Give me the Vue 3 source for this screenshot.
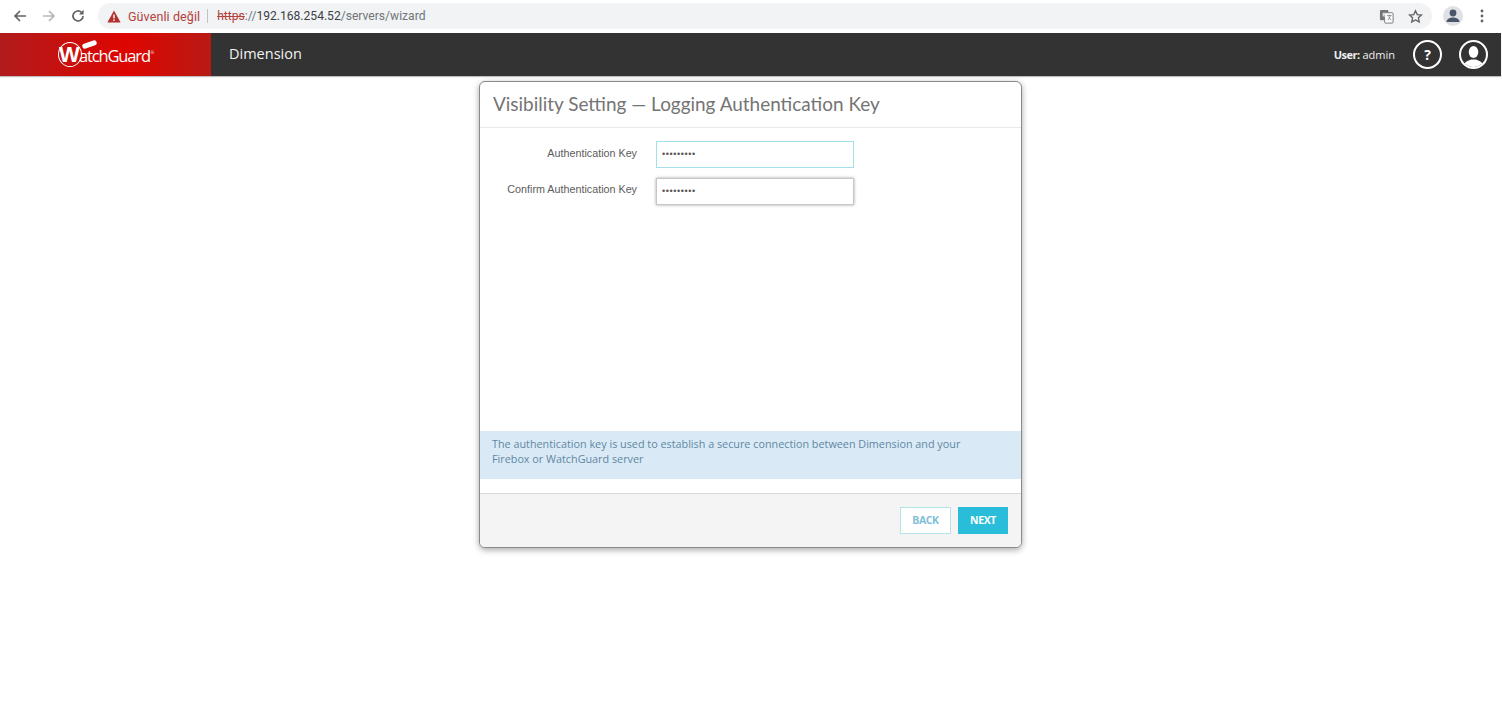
<script setup>
const fields = [
  { label: 'Authentication Key', value: '•••••••••', focused: true },
  { label: 'Confirm Authentication Key', value: '•••••••••', focused: false }
]
</script>

<template>
  <div class="page">
    <div class="toolbar">
      <svg class="nav-icon" viewBox="0 0 16 16"><path d="M14 8H3M8 3L3 8l5 5" fill="none" stroke="#5f6368" stroke-width="1.7" /></svg>
      <svg class="nav-icon forward" viewBox="0 0 16 16"><path d="M2 8h11M8 3l5 5-5 5" fill="none" stroke="#b4b6b9" stroke-width="1.7" /></svg>
      <svg class="nav-icon reload" viewBox="0 0 16 16"><path d="M13 8a5 5 0 1 1-1.500-3.600" fill="none" stroke="#5f6368" stroke-width="1.7" /><path d="M13.600 1.800v4.600H9z" fill="#5f6368" /></svg>
      <div class="omnibox">
        <svg class="warn" viewBox="0 0 14 13"><path d="M7 0.500L13.600 12.500H0.400z" fill="#b3312c" /><path d="M6.300 4.600h1.400v4H6.300zM6.300 9.600h1.400v1.400H6.300z" fill="#fff" /></svg>
        <span class="insecure">Güvenli değil</span>
        <span class="divider"></span>
        <span class="url"><span class="scheme">https</span><span class="slashes">://</span><span class="host">192.168.254.52</span>/servers/wizard</span>
        <svg class="translate" viewBox="0 0 16 16">
          <rect x="1" y="1" width="9" height="11" rx="1" fill="#73777b" />
          <rect x="6" y="4" width="9" height="11" rx="1" fill="#fff" stroke="#73777b" />
          <path d="M8.500 7h5M11 6v1M9.500 12l3-5M10 8l3 4" fill="none" stroke="#73777b" stroke-width="0.8" />
          <path d="M7 4.500H4.500v3H7M4.500 6H7" fill="none" stroke="#fff" stroke-width="0.9" />
        </svg>
        <svg class="star" viewBox="0 0 16 16"><path d="M8 1.800l1.900 4.100 4.500.5-3.300 3 .9 4.400L8 11.600l-4 2.200.9-4.400-3.300-3 4.500-.5z" fill="none" stroke="#5f6368" stroke-width="1.4" /></svg>
      </div>
      <div class="avatar">
        <svg viewBox="0 0 20 20"><circle cx="10" cy="7" r="3.400" fill="#4a5568" /><path d="M3.600 15.500c0-2.800 4-4 6.400-4s6.400 1.200 6.400 4v.5H3.600z" fill="#4a5568" /></svg>
      </div>
      <svg class="menu" viewBox="0 0 4 16"><circle cx="2" cy="3" r="1.400" fill="#5f6368" /><circle cx="2" cy="8" r="1.400" fill="#5f6368" /><circle cx="2" cy="13" r="1.400" fill="#5f6368" /></svg>
    </div>

    <header class="app-header">
      <div class="brand">
        <div class="logo">
          <span class="logo-ring"></span>
          <span class="logo-w">W</span>
          <span class="logo-flick"></span>
          <span class="logo-text">atchGuard</span>
          <span class="logo-tm">®</span>
        </div>
      </div>
      <div class="product">Dimension</div>
      <div class="user"><b>User:</b> admin</div>
      <div class="round-btn"><span>?</span></div>
      <div class="round-btn person">
        <svg viewBox="0 0 25 25"><ellipse cx="12.500" cy="10" rx="4.800" ry="6" fill="#fff" /><path d="M2 25c.5-5 5.500-6.500 8-7.500h5c2.500 1 7.500 2.500 8 7.500z" fill="#fff" /></svg>
      </div>
    </header>

    <main class="stage">
      <section class="dialog">
        <h1 class="dialog-title">Visibility Setting — Logging Authentication Key</h1>
        <div class="form">
          <div v-for="f in fields" :key="f.label" class="row">
            <label class="label">{{ f.label }}</label>
            <div class="input" :class="{ focused: f.focused }">{{ f.value }}</div>
          </div>
        </div>
        <p class="hint">The authentication key is used to establish a secure connection between Dimension and your Firebox or WatchGuard server</p>
        <footer class="actions">
          <button class="btn back"><span>BACK</span></button>
          <button class="btn next"><span>NEXT</span></button>
        </footer>
      </section>
    </main>
  </div>
</template>

<style>
html, body { margin: 0; background: #fff; }
</style>

<style scoped>
.page {
  width: 1502px;
  height: 705px;
  overflow: hidden;
  display: flex;
  flex-direction: column;
  font-family: "Open Sans", sans-serif;
}

.toolbar {
  height: 33px;
  flex: none;
  display: flex;
  align-items: center;
  padding-left: 12px;
  padding-bottom: 1px;
  box-sizing: border-box;
  background: #fff;
}

.nav-icon { width: 16px; height: 16px; margin-right: 13px; }
.forward { margin-right: 14px; }
.reload { margin-right: 12px; margin-left: -1px; }

.omnibox {
  width: 1334px;
  height: 26px;
  border-radius: 13px;
  background: #f1f3f4;
  display: flex;
  align-items: center;
  padding-left: 9px;
  box-sizing: border-box;
  font-family: Roboto, sans-serif;
  font-size: 12.500px;
}

.warn { width: 14px; height: 13px; margin-right: 7px; }
.insecure { color: #b3413c; letter-spacing: 0.1px; }
.divider { width: 1px; height: 14px; background: #c0c3c6; margin: 0 9px 0 7px; }
.url { color: #70757a; flex: 1; font-size: 12.100px; }
.scheme { color: #b3413c; text-decoration: line-through; }
.host { color: #3c4043; }
.translate { width: 15px; height: 15px; margin-right: 14px; }
.star { width: 15px; height: 15px; margin-right: 9px; }

.avatar {
  width: 20px;
  height: 20px;
  margin-left: 11px;
  border-radius: 50%;
  background: #dfe1e5;
}
.avatar svg { display: block; }
.menu { width: 4px; height: 16px; margin-left: 17px; }

.app-header {
  height: 43px;
  width: 1501px;
  flex: none;
  display: flex;
  align-items: center;
  background: #333;
  color: #fff;
  padding-right: 14px;
  box-sizing: border-box;
  box-shadow: 0 1px 1px rgba(0, 0, 0, 0.25);
}

.brand {
  width: 211px;
  height: 100%;
  background: linear-gradient(90deg, #b01c1c 0%, #de0500 60%, #b81a14 100%);
  display: flex;
  align-items: center;
  padding-left: 58px;
  box-sizing: border-box;
}

.logo { display: flex; align-items: center; position: relative; height: 25px; }
.logo-ring {
  width: 24px;
  height: 25px;
  border: 1.500px solid #fff;
  border-radius: 50%;
  box-sizing: border-box;
}
.logo-w {
  position: absolute;
  left: 1px;
  top: 2px;
  font-family: "Liberation Sans", sans-serif;
  font-weight: 700;
  font-size: 22px;
  line-height: 22px;
  letter-spacing: -1px;
}
.logo-flick {
  position: absolute;
  left: 24px;
  top: -0.500px;
  width: 15px;
  height: 5px;
  background: #fff;
  border-radius: 3px;
  transform: rotate(-20deg);
}
.logo-text {
  font-family: "Open Sans", sans-serif;
  font-size: 16.500px;
  letter-spacing: -1.150px;
  margin-left: -3px;
  margin-top: 2px;
}
.logo-tm { font-size: 4px; align-self: flex-start; margin-top: 8px; margin-left: 1px; }

.product {
  margin-left: 18px;
  margin-bottom: 2px;
  font-size: 14.500px;
  flex: 1;
  color: #f2f2f2;
}

.user { font-size: 11px; margin-right: 18px; margin-bottom: 1px; color: #eee; }
.user b { font-weight: 700; letter-spacing: -0.5px; }

.round-btn {
  width: 29px;
  height: 29px;
  box-sizing: border-box;
  border: 2px solid #fff;
  border-radius: 50%;
  display: flex;
  align-items: center;
  justify-content: center;
  font-weight: 700;
  font-size: 14px;
}
.person { margin-left: 17px; overflow: hidden; margin-right: -1px; }
.person svg { width: 25px; height: 25px; display: block; }

.stage {
  flex: 1;
  display: flex;
  justify-content: center;
  align-items: flex-start;
  padding-top: 5px;
  padding-right: 1px;
}

.dialog {
  width: 543px;
  height: 467px;
  box-sizing: border-box;
  border: 1px solid #8a8a8a;
  border-radius: 6px;
  box-shadow: 0 2px 6px rgba(0, 0, 0, 0.35);
  display: flex;
  flex-direction: column;
  overflow: hidden;
  background: #fff;
}

.dialog-title {
  margin: 0;
  height: 45px;
  padding: 0 13px;
  flex: none;
  border-bottom: 1px solid #e9e9e9;
  font-family: Lato, sans-serif;
  font-weight: 400;
  font-size: 18.950px;
  line-height: 44px;
  color: #747474;
}

.form {
  flex: 1;
  padding-top: 13px;
  display: flex;
  flex-direction: column;
  gap: 10px;
}

.row { display: flex; align-items: flex-start; }
.row + .row .label { line-height: 22px; }

.label {
  width: 157px;
  text-align: right;
  font-family: "Liberation Sans", sans-serif;
  font-size: 10.750px;
  line-height: 24px;
  color: #5c5c5c;
}

.input {
  width: 198px;
  height: 27px;
  margin-left: 19px;
  box-sizing: border-box;
  border: 1px solid #c6c6c6;
  box-shadow: 0 0 3px rgba(0, 0, 0, 0.35);
  padding-left: 5px;
  font-family: "Liberation Sans", sans-serif;
  font-size: 9px;
  letter-spacing: 0.600px;
  line-height: 24px;
  color: #555;
}

.input.focused {
  border-color: #a3e0ea;
  box-shadow: none;
}

.hint {
  margin: 0 0 14px;
  height: 48px;
  flex: none;
  box-sizing: border-box;
  padding: 5px 50px 0 12px;
  background: #d9eaf6;
  color: #5f87a3;
  font-size: 10.800px;
  line-height: 15px;
}

.actions {
  height: 54px;
  flex: none;
  box-sizing: border-box;
  border-top: 1px solid #d8d8d8;
  background: #f4f4f4;
  display: flex;
  justify-content: flex-end;
  align-items: center;
  gap: 7px;
  padding-right: 13px;
  padding-bottom: 1px;
}

.btn {
  height: 27px;
  padding: 0 0 1px;
  font-family: "Open Sans", sans-serif;
  font-weight: 700;
  font-size: 10.500px;
  letter-spacing: -0.4px;
  box-sizing: border-box;
}
.back {
  width: 51px;
  background: #fff;
  border: 1px solid #b5e3ec;
  color: #7fbfd6;
}
.next {
  width: 50px;
  background: #29bdd9;
  border: 1px solid #29bdd9;
  color: #fff;
}
</style>
